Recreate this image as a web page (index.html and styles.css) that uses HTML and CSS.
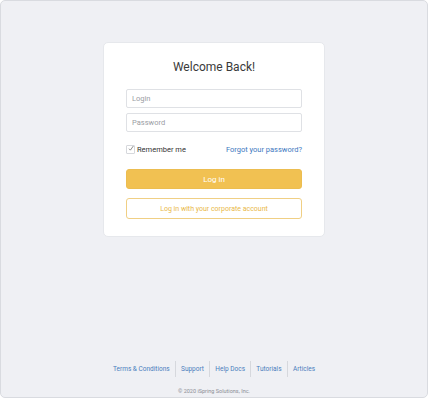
FILE: index.html
```html
<!DOCTYPE html>
<html lang="en">
<head>
  <meta charset="UTF-8" />
  <meta name="viewport" content="width=device-width, initial-scale=1.0" />
  <title>Welcome Back!</title>
  <link rel="stylesheet" href="styles.css">
</head>
<body>
  <div class="frame">
    <div class="card">
      <h1>Welcome Back!</h1>

      <input type="text" class="field" placeholder="Login" />
      <input type="password" class="field" placeholder="Password" />

      <div class="row">
        <label class="remember">
          <span class="check">
            <svg width="9" height="9" viewBox="0 0 9 9"><path d="M1.5 4.8 L3.6 7 L8 0.8" fill="none" stroke="#444" stroke-width="0.9"/></svg>
          </span>
          Remember me
        </label>
        <a href="#" class="forgot">Forgot your password?</a>
      </div>

      <button class="login">Log in</button>
      <button class="corporate">Log in with your corporate account</button>
    </div>

    <div class="footer">
      <nav class="links">
        <a href="#">Terms &amp; Conditions</a>
        <a href="#">Support</a>
        <a href="#">Help Docs</a>
        <a href="#">Tutorials</a>
        <a href="#">Articles</a>
      </nav>
      <p class="copy">© 2020 iSpring Solutions, Inc.</p>
    </div>
  </div>
</body>
</html>
```

FILE: styles.css
```css
body {
  margin: 0;
  font-family: Roboto, 'Liberation Sans', Arial, sans-serif;
}
.frame {
  box-sizing: border-box;
  width: 428px;
  height: 398px;
  background: #eff0f4;
  border: 1px solid #d9dbe0;
  border-radius: 5px;
  display: flex;
  flex-direction: column;
  align-items: center;
}
.card {
  box-sizing: border-box;
  width: 222px;
  margin-top: 41px;
  padding: 14px 22px 17px;
  background: #fff;
  border: 1px solid #e6e8ec;
  border-radius: 5px;
  display: flex;
  flex-direction: column;
}
h1 {
  margin: 3px 0 15px;
  font-size: 12px;
  font-weight: 400;
  color: #3a3a3a;
  text-align: center;
}
.field {
  box-sizing: border-box;
  width: 100%;
  height: 19px;
  margin-bottom: 5px;
  padding: 0 5px;
  border: 1px solid #dfe1e5;
  border-radius: 2px;
  font-family: inherit;
  font-size: 7.5px;
  color: #333;
}
.field::placeholder {
  color: #9a9da3;
}
.row {
  display: flex;
  justify-content: space-between;
  align-items: center;
  margin-top: 8px;
  font-size: 7.5px;
}
.remember {
  display: flex;
  align-items: center;
  gap: 2px;
  color: #333;
}
.check {
  width: 9px;
  height: 9px;
  border: 1px solid #d6d8dc;
  border-radius: 1px;
  display: flex;
  align-items: center;
  justify-content: center;
  box-sizing: border-box;
  overflow: visible;
}
.check svg {
  margin-top: -2px;
  margin-left: 1px;
}
.forgot {
  color: #3d78c0;
  text-decoration: none;
}
button {
  box-sizing: border-box;
  width: 100%;
  border-radius: 3px;
  font-family: inherit;
  cursor: pointer;
}
.login {
  height: 20px;
  margin-top: 15px;
  background: #f1c152;
  border: 1px solid #ecbd50;
  color: #fff;
  font-size: 8px;
}
.corporate {
  height: 21px;
  margin-top: 9px;
  background: #fff;
  border: 1px solid #f0cf84;
  color: #e9b848;
  font-size: 7px;
}
.footer {
  margin-top: auto;
  margin-bottom: 3px;
  text-align: center;
}
.links {
  display: flex;
  justify-content: center;
}
.links a {
  padding: 4px 5.2px;
  font-size: 6.5px;
  color: #4a7dbd;
  text-decoration: none;
  border-left: 1px solid #d6d8dd;
  line-height: 8px;
}
.links a:first-child {
  border-left: none;
}
.copy {
  margin: 11px 0 0;
  font-size: 5.5px;
  color: #8c8f95;
}
```
